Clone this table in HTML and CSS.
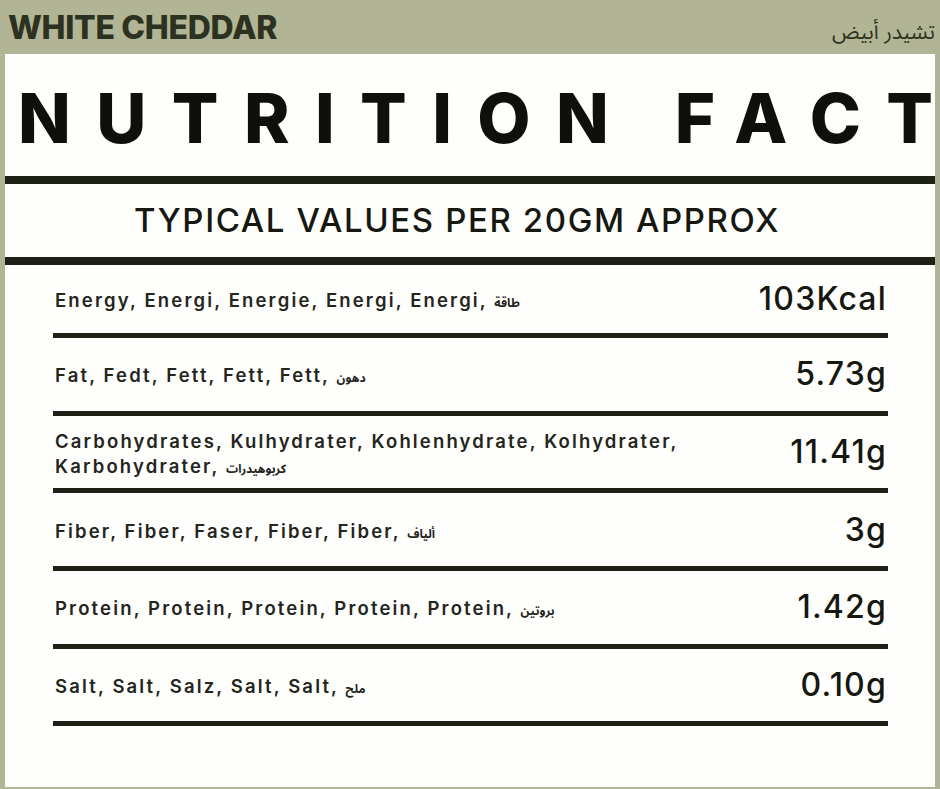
FILE: index.html
```html
<!DOCTYPE html>
<html lang="en">
<head>
<meta charset="utf-8">
<title>White Cheddar – Nutrition Fact</title>
<link rel="stylesheet" href="styles.css">
</head>
<body>
<header class="top">
  <h1 class="product">WHITE CHEDDAR</h1>
  <span class="product-ar" lang="ar" dir="rtl">تشيدر أبيض</span>
</header>
<main class="panel">
  <div class="heading">NUTRITION FAC<span class="last">T</span></div>
  <div class="sub">TYPICAL VALUES PER 20GM APPROX</div>
  <div class="rows">
    <div class="row first">
      <div class="label">Energy, Energi, Energie, Energi, Energi, <span class="ar" lang="ar">طاقة</span></div>
      <div class="value">103Kcal</div>
    </div>
    <div class="row">
      <div class="label">Fat, Fedt, Fett, Fett, Fett, <span class="ar" lang="ar">دهون</span></div>
      <div class="value">5.73g</div>
    </div>
    <div class="row">
      <div class="label">Carbohydrates, Kulhydrater, Kohlenhydrate, Kolhydrater,<br>Karbohydrater, <span class="ar" lang="ar">كربوهيدرات</span></div>
      <div class="value">11.41g</div>
    </div>
    <div class="row">
      <div class="label">Fiber, Fiber, Faser, Fiber, Fiber, <span class="ar" lang="ar">ألياف</span></div>
      <div class="value">3g</div>
    </div>
    <div class="row">
      <div class="label">Protein, Protein, Protein, Protein, Protein, <span class="ar" lang="ar">بروتين</span></div>
      <div class="value">1.42g</div>
    </div>
    <div class="row">
      <div class="label">Salt, Salt, Salz, Salt, Salt, <span class="ar" lang="ar">ملح</span></div>
      <div class="value">0.10g</div>
    </div>
  </div>
</main>
</body>
</html>
```

FILE: styles.css
```css
html, body {
  margin: 0;
  padding: 0;
}
body {
  width: 940px;
  height: 789px;
  overflow: hidden;
  background: #b1b595;
  font-family: Inter, "Noto Sans", sans-serif;
  color: #1c1d15;
}
.top {
  height: 54px;
  box-sizing: border-box;
  display: flex;
  justify-content: space-between;
  align-items: baseline;
  padding: 3px 5px 0 8px;
}
.product {
  margin: 0;
  font-family: Inter, sans-serif;
  font-weight: 800;
  font-size: 32px;
  line-height: 50px;
  letter-spacing: -0.3px;
  color: #2d3220;
}
.product-ar {
  font-family: "Noto Sans Arabic", "DejaVu Sans", sans-serif;
  font-size: 21px;
  color: #2d3220;
}
.panel {
  margin: 0 5px 0 5px;
  height: 733px;
  background: #fefefd;
  display: flex;
  flex-direction: column;
}
.heading {
  height: 122px;
  box-sizing: border-box;
  padding: 6px 0 0 13px;
  display: flex;
  align-items: center;
  font-weight: 800;
  font-size: 69px;
  line-height: 1;
  letter-spacing: 25.4px;
  color: #0f100b;
  white-space: pre;
}
.heading .last {
  letter-spacing: 0;
}
.sub {
  height: 73px;
  border-top: 8px solid #1e2115;
  border-bottom: 8px solid #1e2115;
  display: flex;
  align-items: center;
  justify-content: center;
  padding-right: 26px;
  font-weight: 500;
  font-size: 33px;
  line-height: 1;
  letter-spacing: 1.6px;
  color: #16170f;
}
.rows {
  margin: 0 47px 0 48px;
  display: flex;
  flex-direction: column;
}
.row {
  height: 72.7px;
  border-bottom: 5px solid #1e2115;
  display: flex;
  justify-content: space-between;
  align-items: center;
  padding: 0 1px 0 2px;
}
.row.first {
  height: 68px;
}
.label {
  margin-top: 6px;
  font-weight: 600;
  font-size: 18.5px;
  line-height: 25px;
  letter-spacing: 2.15px;
  color: #24251c;
}
.ar {
  font-family: "Noto Sans Arabic", "DejaVu Sans", sans-serif;
  font-size: 12px;
  font-weight: 700;
  letter-spacing: 0;
}
.value {
  font-weight: 500;
  font-size: 32px;
  line-height: 1;
  letter-spacing: 1.2px;
  color: #16170f;
}
```
